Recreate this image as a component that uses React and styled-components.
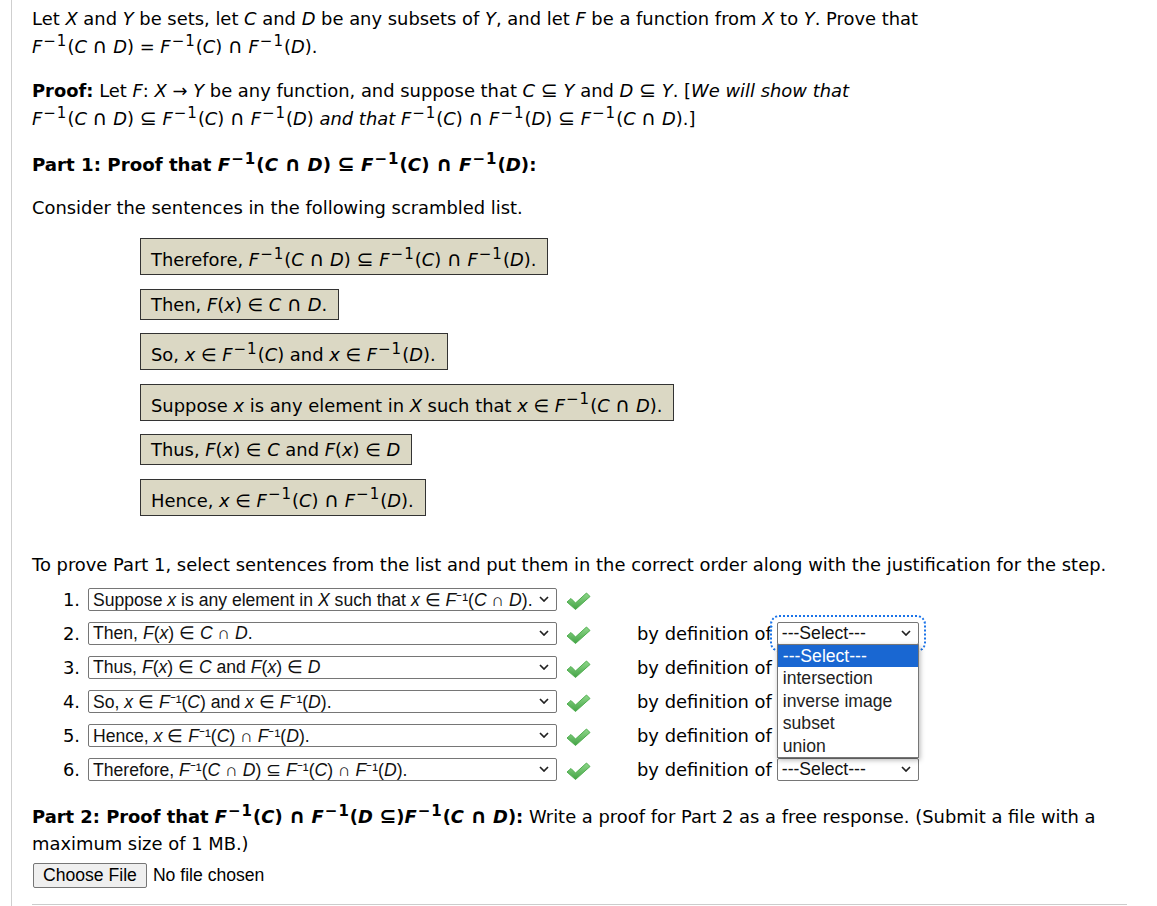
import React from "react";
import styled, { createGlobalStyle } from "styled-components";

const GlobalStyle = createGlobalStyle`
  html, body { margin: 0; padding: 0; background: #fff; }
  body {
    font-family: "DejaVu Sans", Verdana, sans-serif;
    font-size: 17.9px;
    color: #000;
  }
`;

const Page = styled.div`
  padding-left: 11px;
  width: 1157px;
  height: 906px;
  box-sizing: border-box;
  overflow: hidden;
`;

const Panel = styled.div`
  border-left: 1px solid #cfcfcf;
  padding: 5px 30px 0 20px;
  min-height: 906px;
  box-sizing: border-box;
`;

const Para = styled.p`
  margin: ${(p) => p.$mt || 0}px 0 0;
  line-height: ${(p) => p.$lh || 28}px;
`;

const Heading = styled.h4`
  margin: 16px 0 0;
  font-size: 18.2px;
  font-weight: bold;
  line-height: 32px;
`;

const V = styled.i`
  font-style: italic;
`;

const Op = styled.span`
  font-size: 1.14em;
  line-height: 0;
`;

const Sup = styled.sup`
  font-size: 15px;
  line-height: 0;
  vertical-align: 0.5em;
  letter-spacing: 1px;
  margin-left: 1px;
`;

const Inv = () => (
  <>
    <V>F</V>
    <Sup>−1</Sup>
  </>
);

const Cap = () => <Op>∩</Op>;
const Sub = () => <Op>⊆</Op>;

const Scrambled = styled.div`
  margin: 16px 0 0 108px;
  display: flex;
  flex-direction: column;
  align-items: flex-start;
  gap: 13.5px;
`;

const Sentence = styled.div`
  background: #dbd8c4;
  border: 1px solid #333;
  padding: ${(p) => (p.$sup ? 6 : 0)}px 11px 0 10px;
  line-height: 29px;
`;

const Steps = styled.div`
  margin-top: 3px;
`;

const Row = styled.div`
  display: flex;
  align-items: center;
  height: 34px;
`;

const Num = styled.span`
  width: 48px;
  text-align: right;
`;

const SelectBox = styled.div`
  position: relative;
  box-sizing: border-box;
  width: ${(p) => p.$w}px;
  height: 23px;
  margin-left: ${(p) => p.$ml || 0}px;
  border: 1px solid #767676;
  border-radius: 2px;
  background: #fff;
  display: flex;
  align-items: center;
  padding: 0 0 0 4px;
  font-family: "Liberation Sans", Arial, sans-serif;
  font-size: 17.6px;
  color: #111;
  white-space: nowrap;
  outline: ${(p) => (p.$focus ? "2px dotted #1a73e8" : "none")};
  outline-offset: 5px;
`;

const SelectText = styled.span`
  flex: 1;
  overflow: hidden;
`;

const Chevron = () => (
  <svg width="10" height="6" viewBox="0 0 10 6" style={{ margin: "0 7px 0 4px", flexShrink: 0 }}>
    <path d="M1 1 L5 5 L9 1" fill="none" stroke="#222" strokeWidth="1.7" />
  </svg>
);

const Check = () => (
  <svg width="26" height="20" viewBox="0 0 26 20" style={{ marginLeft: 8, marginTop: 4 }}>
    <defs>
      <linearGradient id="ck" x1="0" y1="0" x2="0" y2="1">
        <stop offset="0" stopColor="#8fd88a" />
        <stop offset="1" stopColor="#44a346" />
      </linearGradient>
    </defs>
    <polygon
      points="2,11 6,7.5 10.5,12 21.5,2 25,5.5 10.5,18.5"
      fill="url(#ck)"
      stroke="#4fae4f"
      strokeWidth="1"
      strokeLinejoin="round"
    />
  </svg>
);

const Justify = styled.div`
  display: flex;
  align-items: center;
  margin-left: 46px;
  gap: 5px;
`;

const Dropdown = styled.ul`
  position: absolute;
  top: 100%;
  left: -1px;
  width: 142px;
  margin: 0;
  padding: 0;
  list-style: none;
  background: #fff;
  border: 1px solid #767676;
  box-shadow: 1px 2px 5px rgba(0, 0, 0, 0.3);
  z-index: 5;
  box-sizing: border-box;
`;

const Option = styled.li`
  height: 22.6px;
  line-height: 22.6px;
  padding-left: 5px;
  background: ${(p) => (p.$active ? "#1967d2" : "#fff")};
  color: ${(p) => (p.$active ? "#fff" : "#222")};
`;

const FileRow = styled.div`
  margin-top: 6px;
  display: flex;
  align-items: center;
  gap: 6px;
  font-family: "Liberation Sans", Arial, sans-serif;
  font-size: 17.6px;
`;

const FileButton = styled.button`
  height: 25px;
  padding: 0 9px;
  font: inherit;
  background: #efefef;
  border: 1px solid #767676;
  border-radius: 2px;
  color: #000;
  margin-left: 1px;
`;

const Rule = styled.hr`
  margin: 16px 0 0;
  border: 0;
  border-top: 1px solid #ccc;
`;

const steps = [
  {
    text: (
      <>
        Suppose <V>x</V> is any element in <V>X</V> such that <V>x</V> ∈ <V>F</V>⁻¹(<V>C</V> ∩ <V>D</V>).
      </>
    ),
  },
  { text: <>Then, <V>F</V>(<V>x</V>) ∈ <V>C</V> ∩ <V>D</V>.</>, why: "open" },
  { text: <>Thus, <V>F</V>(<V>x</V>) ∈ <V>C</V> and <V>F</V>(<V>x</V>) ∈ <V>D</V></>, why: "closed" },
  { text: <>So, <V>x</V> ∈ <V>F</V>⁻¹(<V>C</V>) and <V>x</V> ∈ <V>F</V>⁻¹(<V>D</V>).</>, why: "closed" },
  { text: <>Hence, <V>x</V> ∈ <V>F</V>⁻¹(<V>C</V>) ∩ <V>F</V>⁻¹(<V>D</V>).</>, why: "closed" },
  {
    text: (
      <>
        Therefore, <V>F</V>⁻¹(<V>C</V> ∩ <V>D</V>) ⊆ <V>F</V>⁻¹(<V>C</V>) ∩ <V>F</V>⁻¹(<V>D</V>).
      </>
    ),
    why: "closed",
  },
];

const options = ["---Select---", "intersection", "inverse image", "subset", "union"];

export default function App() {
  return (
    <Page>
      <GlobalStyle />
      <Panel>
        <Para>
          Let <V>X</V> and <V>Y</V> be sets, let <V>C</V> and <V>D</V> be any subsets of <V>Y</V>, and let <V>F</V> be a
          function from <V>X</V> to <V>Y</V>. Prove that
          <br />
          <Inv />(<V>C</V> <Cap /> <V>D</V>) = <Inv />(<V>C</V>) <Cap /> <Inv />(<V>D</V>).
        </Para>
        <Para $mt={16}>
          <b>Proof:</b> Let <V>F</V>: <V>X</V> → <V>Y</V> be any function, and suppose that <V>C</V> <Sub /> <V>Y</V> and{" "}
          <V>D</V> <Sub /> <V>Y</V>. [<V>We will show that</V>
          <br />
          <Inv />(<V>C</V> <Cap /> <V>D</V>) <Sub /> <Inv />(<V>C</V>) <Cap /> <Inv />(<V>D</V>) <V>and that</V>{" "}
          <Inv />(<V>C</V>) <Cap /> <Inv />(<V>D</V>) <Sub /> <Inv />(<V>C</V> <Cap /> <V>D</V>).]
        </Para>
        <Heading>
          Part 1: Proof that <Inv />(<V>C</V> <Cap /> <V>D</V>) <Sub /> <Inv />(<V>C</V>) <Cap /> <Inv />(<V>D</V>):
        </Heading>
        <Para $mt={13}>Consider the sentences in the following scrambled list.</Para>

        <Scrambled>
          <Sentence $sup>
            Therefore, <Inv />(<V>C</V> <Cap /> <V>D</V>) <Sub /> <Inv />(<V>C</V>) <Cap /> <Inv />(<V>D</V>).
          </Sentence>
          <Sentence>
            Then, <V>F</V>(<V>x</V>) ∈ <V>C</V> <Cap /> <V>D</V>.
          </Sentence>
          <Sentence $sup>
            So, <V>x</V> ∈ <Inv />(<V>C</V>) and <V>x</V> ∈ <Inv />(<V>D</V>).
          </Sentence>
          <Sentence $sup>
            Suppose <V>x</V> is any element in <V>X</V> such that <V>x</V> ∈ <Inv />(<V>C</V> <Cap /> <V>D</V>).
          </Sentence>
          <Sentence>
            Thus, <V>F</V>(<V>x</V>) ∈ <V>C</V> and <V>F</V>(<V>x</V>) ∈ <V>D</V>
          </Sentence>
          <Sentence $sup>
            Hence, <V>x</V> ∈ <Inv />(<V>C</V>) <Cap /> <Inv />(<V>D</V>).
          </Sentence>
        </Scrambled>

        <Para $mt={35.5}>
          To prove Part 1, select sentences from the list and put them in the correct order along with the
          justification for the step.
        </Para>

        <Steps>
          {steps.map((s, i) => (
            <Row key={i}>
              <Num>{i + 1}.</Num>
              <SelectBox $w={469} $ml={8}>
                <SelectText>{s.text}</SelectText>
                <Chevron />
              </SelectBox>
              <Check />
              {s.why && (
                <Justify>
                  by definition of
                  <SelectBox $w={142} $focus={s.why === "open"}>
                    <SelectText>---Select---</SelectText>
                    <Chevron />
                    {s.why === "open" && (
                      <Dropdown>
                        {options.map((o, k) => (
                          <Option key={o} $active={k === 0}>
                            {o}
                          </Option>
                        ))}
                      </Dropdown>
                    )}
                  </SelectBox>
                </Justify>
              )}
            </Row>
          ))}
        </Steps>

        <Para $mt={17} $lh={27}>
          <b>
            Part 2: Proof that <Inv />(<V>C</V>) <Cap /> <Inv />(<V>D</V> <Sub />)<Inv />(<V>C</V> <Cap /> <V>D</V>):
          </b>{" "}
          Write a proof for Part 2 as a free response. (Submit a file with a maximum size of 1 MB.)
        </Para>
        <FileRow>
          <FileButton>Choose File</FileButton>
          <span>No file chosen</span>
        </FileRow>
        <Rule />
      </Panel>
    </Page>
  );
}
